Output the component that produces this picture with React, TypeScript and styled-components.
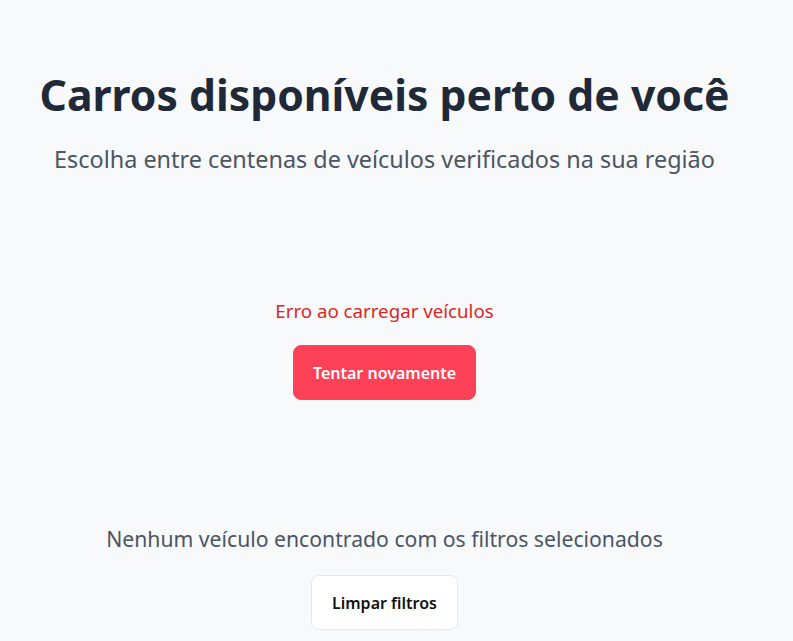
import React from "react";
import styled, { createGlobalStyle } from "styled-components";

const Global = createGlobalStyle`
  html, body { margin: 0; padding: 0; background: #f8f9fb; }
  body { font-family: "Noto Sans", "Open Sans", sans-serif; }
`;

const Page = styled.main`
  min-height: 641px;
  box-sizing: border-box;
  padding: 67px 24px 0 0;
  display: flex;
  flex-direction: column;
  align-items: center;
`;

const Hero = styled.header`
  display: flex;
  flex-direction: column;
  align-items: center;
  gap: 20px;
`;

const Title = styled.h1`
  margin: 0;
  font-size: 42.7px;
  line-height: 56px;
  font-weight: 700;
  color: #1f2937;
`;

const Subtitle = styled.p`
  margin: 0;
  font-size: 23.4px;
  line-height: 32px;
  color: #4b5563;
`;

const State = styled.section<{ $top: number; $gap: number }>`
  margin-top: ${(p) => p.$top}px;
  display: flex;
  flex-direction: column;
  align-items: center;
  gap: ${(p) => p.$gap}px;
`;

const Message = styled.p<{ $error?: boolean }>`
  margin: 0;
  font-size: ${(p) => (p.$error ? 18.7 : 21.2)}px;
  line-height: 28px;
  color: ${(p) => (p.$error ? "#dc2626" : "#4b5563")};
`;

const Button = styled.button<{ $primary?: boolean }>`
  font-family: inherit;
  font-size: 16px;
  font-weight: 600;
  height: 55px;
  padding: 0 ${(p) => (p.$primary ? 19 : 20)}px;
  border-radius: 8px;
  cursor: pointer;
  border: 1px solid ${(p) => (p.$primary ? "#ff4157" : "#e5e7eb")};
  background: ${(p) => (p.$primary ? "#ff4157" : "#ffffff")};
  color: ${(p) => (p.$primary ? "#ffffff" : "#111111")};
`;

export default function App() {
  return (
    <>
      <Global />
      <Page>
        <Hero>
          <Title>Carros disponíveis perto de você</Title>
          <Subtitle>Escolha entre centenas de veículos verificados na sua região</Subtitle>
        </Hero>
        <State $top={122} $gap={20}>
          <Message $error>Erro ao carregar veículos</Message>
          <Button $primary>Tentar novamente</Button>
        </State>
        <State $top={125} $gap={22}>
          <Message>Nenhum veículo encontrado com os filtros selecionados</Message>
          <Button>Limpar filtros</Button>
        </State>
      </Page>
    </>
  );
}
